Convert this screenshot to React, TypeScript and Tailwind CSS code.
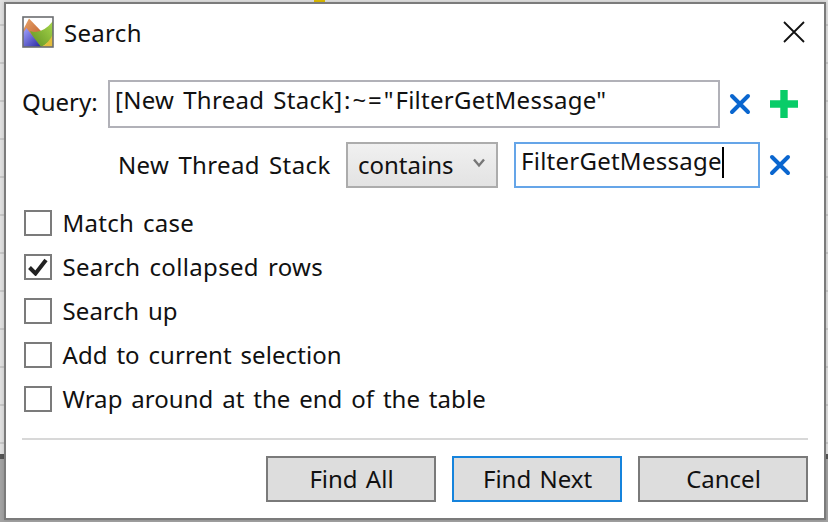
import type { ReactNode } from 'react';

const options = [
  { label: 'Match case', checked: false, spacing: 'tracking-[0.25px]' },
  { label: 'Search collapsed rows', checked: true, spacing: 'tracking-[0.33px]' },
  { label: 'Search up', checked: false, spacing: 'tracking-[0.1px]' },
  { label: 'Add to current selection', checked: false, spacing: 'tracking-[0.07px]' },
  { label: 'Wrap around at the end of the table', checked: false, spacing: 'tracking-[0.05px]' },
];

function AppIcon() {
  return (
    <svg className="h-8 w-8 shrink-0" viewBox="0 0 32 32">
      <defs>
        <linearGradient id="orange" x1="0" y1="0" x2="1" y2="1">
          <stop offset="0" stopColor="#e9a56c" />
          <stop offset="1" stopColor="#c0602c" />
        </linearGradient>
        <linearGradient id="green" x1="0" y1="1" x2="1" y2="0">
          <stop offset="0" stopColor="#5f8f20" />
          <stop offset="1" stopColor="#a8d84c" />
        </linearGradient>
        <linearGradient id="blue" x1="0" y1="0" x2="1" y2="1">
          <stop offset="0" stopColor="#a4a4ff" />
          <stop offset="1" stopColor="#2727a2" />
        </linearGradient>
      </defs>
      <rect x="1" y="1" width="30" height="30" fill="#fff" />
      <path d="M1 14 7 2.5 19 15 12 24 1 20z" fill="url(#orange)" />
      <path d="M8 15Q20 19 31 5V23L20 31H16z" fill="url(#green)" />
      <path d="M19 31Q27 27 31 18V31z" fill="#e3bd3c" />
      <path d="M1 17 4.5 12 19 31H1z" fill="url(#blue)" />
      <rect x="1" y="1" width="30" height="30" fill="none" stroke="#6b6d70" strokeWidth="1.6" />
    </svg>
  );
}

function RemoveIcon() {
  return (
    <svg className="h-[22px] w-[22px] shrink-0" viewBox="0 0 22 22">
      <path d="M3 3 19 19M19 3 3 19" stroke="#0a66cf" strokeWidth="4" strokeLinecap="round" />
    </svg>
  );
}

function Button({ children, primary = false }: { children: ReactNode; primary?: boolean }) {
  return (
    <button
      className={`h-[46px] w-[170px] border-2 bg-[#dddddd] pb-px pl-px [word-spacing:2px] ${primary ? 'border-[#1583dc]' : 'border-[#7a7a7a]'}`}
    >
      {children}
    </button>
  );
}

export default function App() {
  return (
    <div className="relative h-[522px] w-[828px] overflow-hidden bg-[#a3a3a3] font-['Noto_Sans','Open_Sans',sans-serif] text-[24px] leading-[34px] text-[#111]">
      <div className="flex h-[459px] flex-col border-b-[5px] border-[#555] bg-[#e0e0e0]">
        <div className="h-6 shrink-0" />
        {Array.from({ length: 12 }, (_, i) => (
          <div key={i} className="h-[38px] shrink-0 border-t-2 border-[#c8c8c8]" />
        ))}
      </div>
      <div className="absolute top-0 left-[314px] h-1 w-[11px] bg-[#dfbd00]" />

      <div className="absolute top-[2px] left-[4px] flex h-[518px] w-[822px] flex-col border-2 border-[#7b7b7b] bg-white pr-4 pl-4 shadow-[0_0_4px_rgba(0,0,0,0.15)] [word-spacing:2.5px]">
        <header className="mt-3 flex h-8 items-center">
          <AppIcon />
          <span className="ml-[10px] pt-[2px] tracking-[0.3px]">Search</span>
          <svg className="mr-[3px] ml-auto h-[22px] w-[22px]" viewBox="0 0 22 22">
            <path d="M1 1 21 21M21 1 1 21" stroke="#111" strokeWidth="1.8" />
          </svg>
        </header>

        <div className="mt-8 flex h-12 items-center">
          <span className="w-[86px] pb-[5px]">Query:</span>
          <div className="h-12 w-[612px] border-2 border-[#b1b1b8] px-[5px] pt-px tracking-[0.28px] whitespace-nowrap">
            [New Thread Stack<span className="tracking-[1.9px]">]:~="</span>FilterGetMessage"
          </div>
          <div className="ml-[9px] flex items-center gap-[19px]">
            <RemoveIcon />
            <svg className="h-7 w-7" viewBox="0 0 28 28">
              <path d="M14 0v28M0 14h28" stroke="#08cc68" strokeWidth="7.4" />
            </svg>
          </div>
        </div>

        <div className="mt-[14px] flex h-[46px] items-center pl-[96px]">
          <span className="w-[228px] tracking-[0.37px]">New Thread Stack</span>
          <div className="flex h-[46px] w-[152px] items-center justify-between border-2 border-[#acacac] bg-linear-to-b from-[#f0f0f0] to-[#e3e3e3] pr-[11px] pl-[10px]">
            <span>contains</span>
            <svg className="mb-1 h-[10px] w-3" viewBox="0 0 12 10">
              <path d="M1 1.5 6 7.5 11 1.5" fill="none" stroke="#777" strokeWidth="2.4" />
            </svg>
          </div>
          <div className="ml-4 flex h-[46px] w-[246px] items-start border-2 border-[#65a5e8] pl-[5px]">
            <span className="tracking-[0.25px]">FilterGetMessage</span>
            <span className="mt-[3px] h-[31px] w-[2px] bg-black" />
          </div>
          <div className="ml-[9px]">
            <RemoveIcon />
          </div>
        </div>

        <div className="mt-[13px] flex flex-col">
          {options.map((o) => (
            <label key={o.label} className="flex h-11 items-center gap-[10.5px] pl-[2px]">
              <span className="flex h-[26px] w-7 items-center justify-center border-2 border-[#7b7b7b]">
                {o.checked && (
                  <svg className="h-[18px] w-5" viewBox="0 0 20 18">
                    <path d="M1.5 9.5 7.5 15.5 18 2" fill="none" stroke="#222" strokeWidth="4" />
                  </svg>
                )}
              </span>
              <span className={o.spacing}>{o.label}</span>
            </label>
          ))}
        </div>

        <div className="mt-[17px] h-[2px] shrink-0 bg-[#d8d8d8]" />
        <footer className="mt-4 flex justify-end gap-4">
          <Button>Find All</Button>
          <Button primary>Find Next</Button>
          <Button>Cancel</Button>
        </footer>
      </div>
    </div>
  );
}
